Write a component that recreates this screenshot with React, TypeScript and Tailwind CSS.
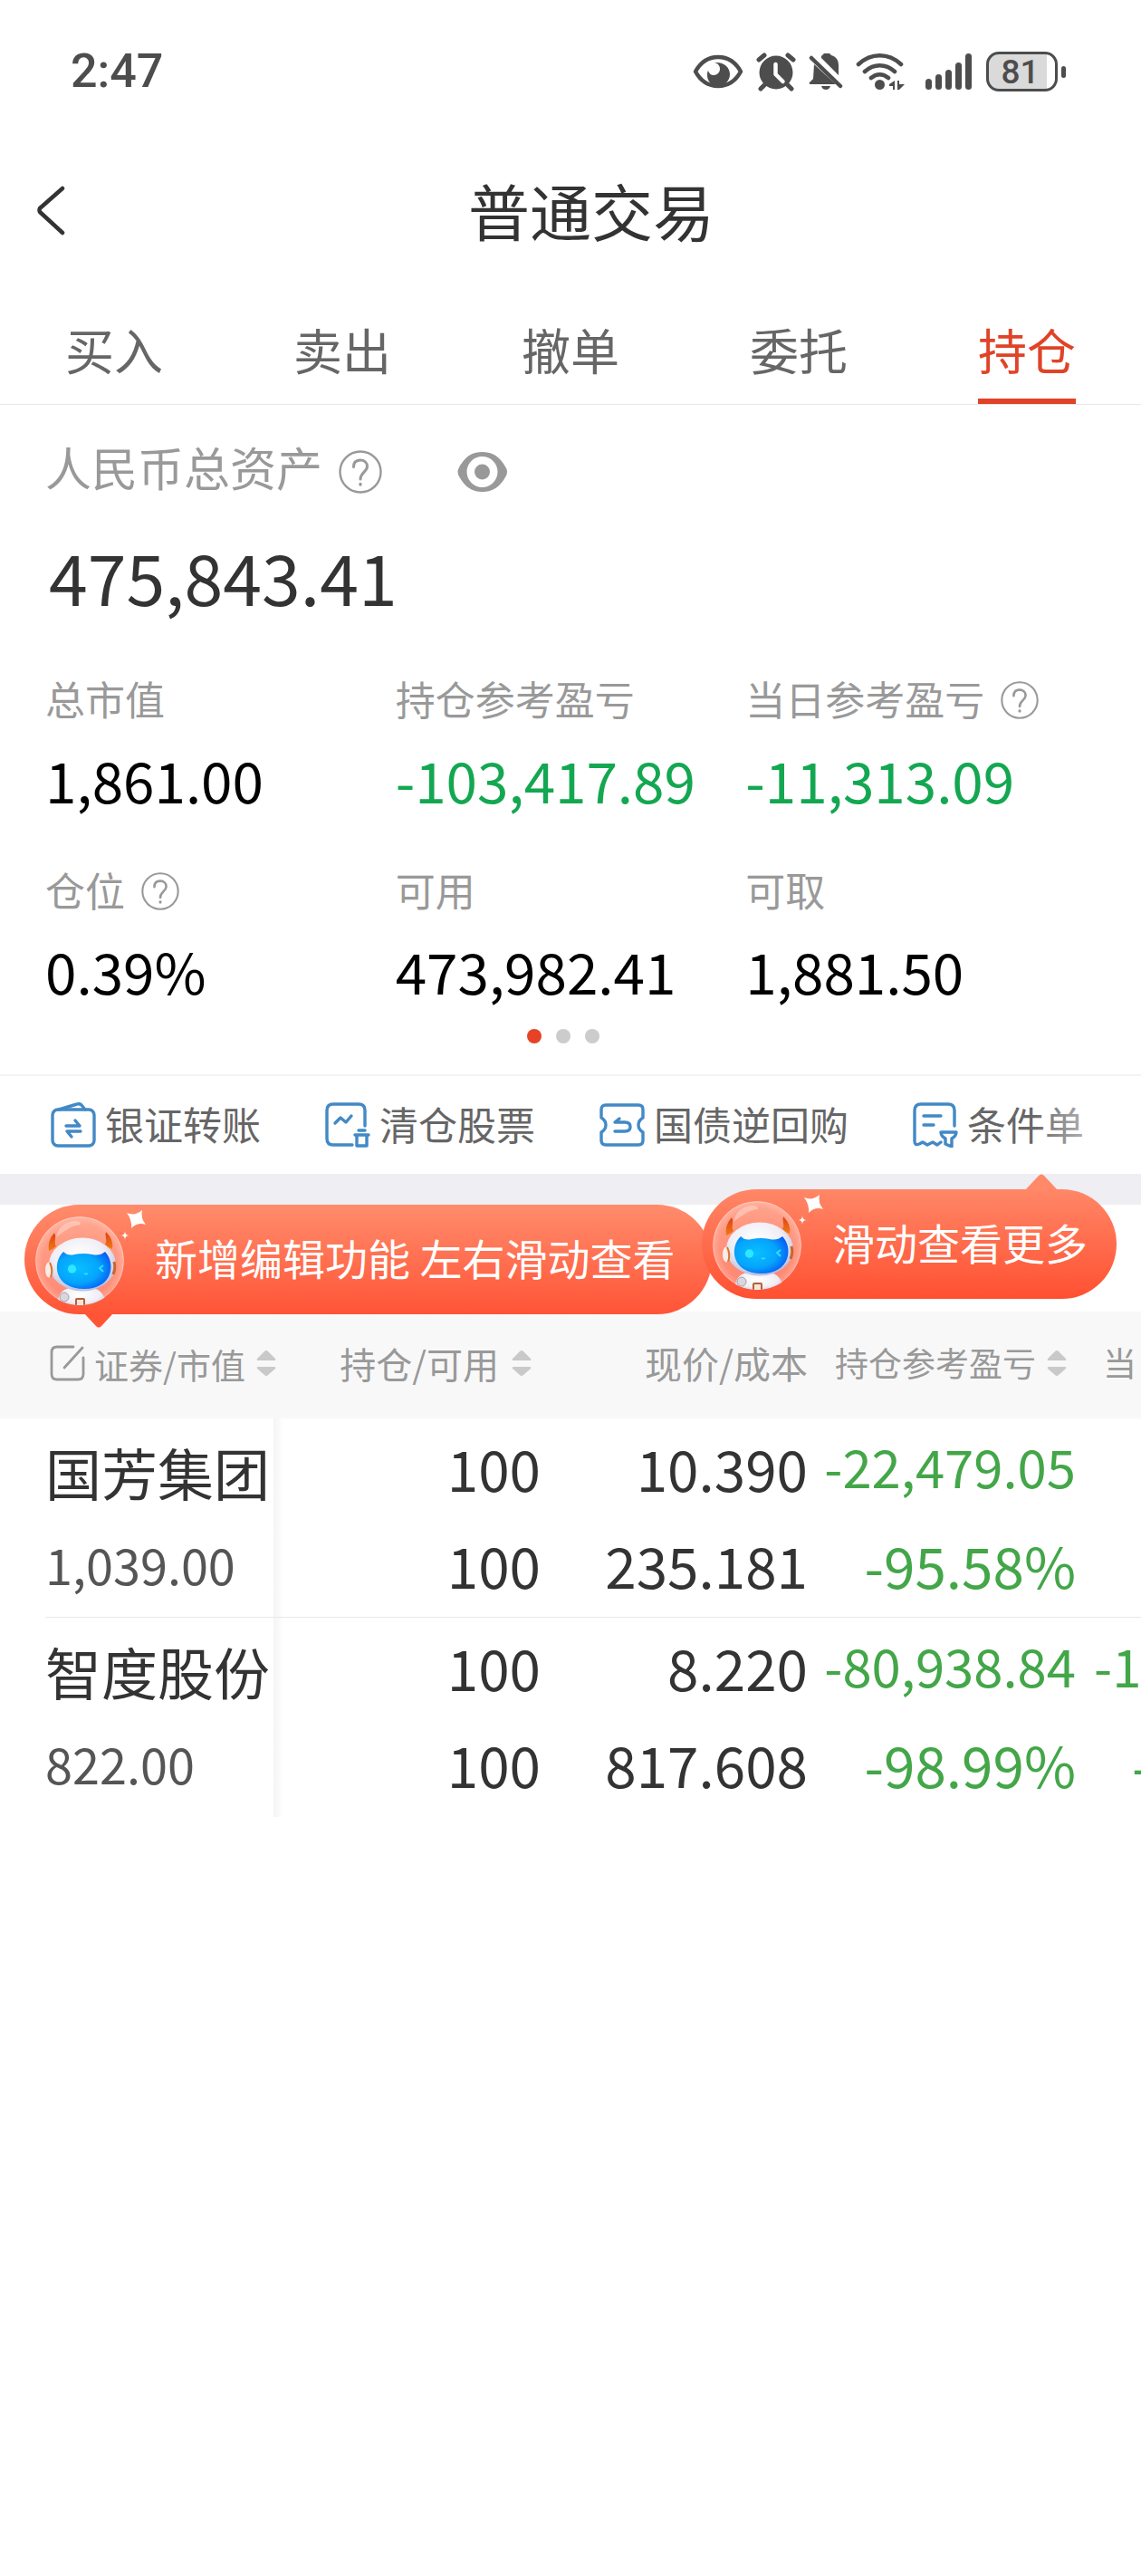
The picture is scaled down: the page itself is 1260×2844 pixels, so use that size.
import React from "react";

const tabs = ["买入", "卖出", "撤单", "委托", "持仓"];

const stats = [
  { label: "总市值", value: "1,861.00" },
  { label: "持仓参考盈亏", value: "-103,417.89", loss: true },
  { label: "当日参考盈亏", value: "-11,313.09", loss: true, help: true },
  { label: "仓位", value: "0.39%", help: true },
  { label: "可用", value: "473,982.41" },
  { label: "可取", value: "1,881.50" },
];

const holdings = [
  {
    name: "国芳集团",
    value: "1,039.00",
    held: "100",
    usable: "100",
    price: "10.390",
    cost: "235.181",
    profit: "-22,479.05",
    ratio: "-95.58%",
    day: "",
    dayRatio: "",
  },
  {
    name: "智度股份",
    value: "822.00",
    held: "100",
    usable: "100",
    price: "8.220",
    cost: "817.608",
    profit: "-80,938.84",
    ratio: "-98.99%",
    day: "-1",
    dayRatio: "-",
  },
];

function StatusBar() {
  return (
    <div className="flex h-[158px] items-center pl-[78px] pr-[83px] text-[#4d4d4d]">
      <span className="flex-1 font-['Roboto',sans-serif] text-[52px] font-medium leading-[60px]">2:47</span>
      <div className="flex items-center">
        {/* eye comfort */}
        <svg width="56" height="44" viewBox="0 0 56 44" fill="none" aria-hidden="true">
          <path d="M3 22C9 11 18 6 28 6s19 5 25 16C47 33 38 38 28 38S9 33 3 22Z" stroke="currentColor" strokeWidth="4.5" strokeLinejoin="round" />
          <path d="M24 12c10-1 17 5 17 13 0 7-6 13-13 13s-12-5-12-12c0-2 0-3 1-5 1 3 3 5 6 5 4 0 7-3 7-7 0-3-2-6-6-7Z" fill="currentColor" />
        </svg>
        {/* alarm */}
        <svg className="ml-[14px]" width="44" height="44" viewBox="0 0 44 44" fill="none" aria-hidden="true">
          <circle cx="22" cy="23" r="18.5" fill="currentColor" />
          <path d="M3 9l6-5M41 9l-6-5" stroke="currentColor" strokeWidth="5" strokeLinecap="round" />
          <path d="M10 36l-5 5M34 36l5 5" stroke="currentColor" strokeWidth="5" strokeLinecap="round" />
          <path d="M21.500 14v11l8 8" stroke="#fff" strokeWidth="4.500" strokeLinecap="round" strokeLinejoin="round" />
        </svg>
        {/* muted bell */}
        <svg className="ml-[14px]" width="38" height="44" viewBox="0 0 38 44" fill="none" aria-hidden="true">
          <path d="M14 5l3-3h6l2 2c6 2 8 6 8 11v11L14 7Z" fill="currentColor" />
          <path d="M6 14l24 22H2c-1 0-2-1-1-2l4-4Z" fill="currentColor" />
          <path d="M3 7l32 31" stroke="currentColor" strokeWidth="4.500" strokeLinecap="round" />
          <path d="M14 38h10c-1 3-3 4-5 4s-4-1-5-4Z" fill="currentColor" />
        </svg>
        {/* wifi */}
        <svg className="ml-[14px]" width="54" height="44" viewBox="0 0 54 44" fill="none" aria-hidden="true">
          <path d="M3 14c14-13 33-13 47 0M10 22c10-9 23-9 33 0M17 29c6-5 13-5 19 0" stroke="currentColor" strokeWidth="4.600" strokeLinecap="round" />
          <circle cx="26.500" cy="36.500" r="5.500" fill="currentColor" />
          <path d="M43 32v10h-2v-4h-4v-2ZM46 32h2v4h6l-6 6h-2Z" fill="currentColor" />
        </svg>
        {/* signal */}
        <svg className="ml-[22px]" width="54" height="44" viewBox="0 0 54 44" aria-hidden="true">
          <g fill="currentColor">
            <rect x="1" y="30" width="7" height="12" rx="3.500" />
            <rect x="12" y="25" width="7" height="17" rx="3.500" />
            <rect x="23" y="20" width="7" height="22" rx="3.500" />
            <rect x="34" y="12" width="7" height="30" rx="3.500" />
            <rect x="45" y="2" width="7" height="40" rx="3.500" />
          </g>
        </svg>
        <div className="ml-3.5 flex h-[44px] w-[79px] items-center justify-center rounded-[14px] border-[3px] border-[#4d4d4d] bg-[linear-gradient(to_right,#dadada_88%,#fff_88%)] pr-1 font-['Roboto',sans-serif] text-[37px] font-medium leading-none">
          81
        </div>
        <div className="ml-1 h-[13px] w-[5px] rounded-full bg-[#4d4d4d]" />
      </div>
    </div>
  );
}

function HelpIcon({ large = false }: { large?: boolean }) {
  return (
    <svg className={large ? "mt-3 size-12" : "mt-1 size-[42px]"} viewBox="0 0 48 48" fill="none" stroke="#999" strokeWidth="2.400" strokeLinecap="round" aria-hidden="true">
      <circle cx="24" cy="24" r="22.500" />
      <path d="M16.500 18.500c0-5 3-7.500 7.500-7.500s7.500 3 7.500 7c0 6-7.500 6.500-7.500 14" strokeWidth="3" />
      <path d="M24 37.500v.5" strokeWidth="3.400" />
    </svg>
  );
}

function SortIcon() {
  return (
    <svg width="22" height="30" viewBox="0 0 22 30" fill="#c9c9c9" aria-hidden="true">
      <path d="M11 1q1 0 2 1l8 8q1 2-1 2H2q-2 0-1-2l8-8q1-1 2-1Z" />
      <path d="M11 29q1 0 2-1l8-7q1-2-1-2H2q-2 0-1 2l8 7q1 1 2 1Z" />
    </svg>
  );
}

const iconProps = {
  width: 50,
  height: 50,
  viewBox: "0 0 50 50",
  fill: "none",
  stroke: "#4289c6",
  strokeWidth: 3.4,
  strokeLinecap: "round" as const,
  strokeLinejoin: "round" as const,
  "aria-hidden": true,
};

const actions = [
  {
    label: "银证转账",
    icon: (
      <svg {...iconProps}>
        <rect x="2" y="8" width="46" height="40" rx="6" />
        <path d="M9 8L29 2q3-1 5 1l4 5" />
        <path d="M17 26h15l-5-6M33 32H18l5 6" />
      </svg>
    ),
  },
  {
    label: "清仓股票",
    icon: (
      <svg {...iconProps}>
        <path d="M44 26V9q0-7-7-7H9Q2 2 2 9v31q0 7 7 7h21" />
        <path d="M11 23l6-6 6 5 6-7" />
        <path d="M33 36h15M37 31h7M35 37v11h11V37" />
      </svg>
    ),
  },
  {
    label: "国债逆回购",
    icon: (
      <svg {...iconProps}>
        <path d="M7 3h36q5 0 5 5v9q-5 3-5 8t5 8v9q0 5-5 5H7q-5 0-5-5v-9q5-3 5-8t-5-8V8q0-5 5-5Z" />
        <path d="M22 18l-5 4h11q6 0 6 5t-6 5H17" />
      </svg>
    ),
  },
  {
    label: "条件单",
    icon: (
      <svg {...iconProps}>
        <path d="M46 26V9q0-7-7-7H9Q2 2 2 9v34q0 5 5 3l4-2 5 3 6-3 5 3 4-3" />
        <path d="M12 15h19M12 25h11" />
        <path d="M31 33h17q0 4-5 7v9l-7-3v-6q-5-3-5-7Z" />
      </svg>
    ),
  },
];

function Robot({ id }: { id: string }) {
  return (
    <svg width="124" height="121" viewBox="12 0 124 121" fill="none" aria-hidden="true">
      <defs>
        <radialGradient id={id + "-bubble"} cx=".5" cy=".5" r=".5">
          <stop offset="0" stopColor="#fff" stopOpacity=".2" />
          <stop offset=".85" stopColor="#fff" stopOpacity=".28" />
          <stop offset="1" stopColor="#fff" stopOpacity=".42" />
        </radialGradient>
        <radialGradient id={id + "-visor"} cx=".4" cy=".45" r=".65">
          <stop offset="0" stopColor="#08c0ff" />
          <stop offset=".6" stopColor="#05a4fc" />
          <stop offset="1" stopColor="#0759f4" />
        </radialGradient>
        <radialGradient id={id + "-head"} cx=".45" cy=".35" r=".65">
          <stop offset="0" stopColor="#fff" />
          <stop offset=".6" stopColor="#f0eef5" />
          <stop offset="1" stopColor="#b9bfdf" />
        </radialGradient>
        <linearGradient id={id + "-horn"} x1="0" y1="0" x2="0" y2="1">
          <stop offset="0" stopColor="#dd4214" />
          <stop offset="1" stopColor="#f07a12" />
        </linearGradient>
        <clipPath id={id + "-clip"}>
          <circle cx="61" cy="62" r="49" />
        </clipPath>
      </defs>
      <circle cx="61" cy="62" r="48.500" fill={"url(#" + id + "-bubble)"} stroke="#fff" strokeOpacity=".4" />
      <path d="M35 36q3-16 20-18 8 0 7 4-9 1-14 5-7 4-13 9Z" fill="#fff" fillOpacity=".32" />
      <g clipPath={"url(#" + id + "-clip)"}>
        <path d="M36 114q0-20 14-22h26q12 2 16 22Z" fill={"url(#" + id + "-head)"} />
        <circle cx="44" cy="102" r="5" fill="#d9d6dd" stroke="#a79fa8" />
        <rect x="57" y="104" width="9" height="12" rx="1" fill="#f3e5dc" stroke="#b85f35" strokeWidth="2" />
      </g>
      <ellipse cx="64" cy="66" rx="37" ry="29.500" fill={"url(#" + id + "-head)"} />
      <path d="M33 31q-8 9-6 20 4-1 8-5-2-3-1-8 1-4-1-7Z" fill={"url(#" + id + "-horn)"} />
      <path d="M90 30q9 9 7 19-4-1-8-5 2-3 1-7-1-4 0-7Z" fill={"url(#" + id + "-horn)"} />
      <ellipse cx="27" cy="72" rx="4" ry="8.500" fill="#f8ece6" />
      <path d="M28 64q4 8 1 16" stroke="#d8742c" strokeWidth="2" />
      <path d="M99 63q2 7-1 14" stroke="#c9652c" strokeWidth="3" />
      <path d="M43 52q5 5 12 3 10-2 20 0 8 2 14-3C101 64 98 93 66 93 33 93 30 64 43 52Z" fill={"url(#" + id + "-visor)"} />
      <circle cx="52.500" cy="71" r="4.700" fill="#2fe6ff" />
      <path d="M87 67l-4 3 4 4M66 76q2 1 4 0" stroke="#35dcff" strokeWidth="1.800" />
      <path d="M130 6q-2 9 4 16-9-3-16 4 1-9-5-17 9 4 17-3Z" fill="#fff" />
      <path d="M111 29q0 5 5 5-5 0-5 5 0-5-5-5 5 0 5-5Z" fill="#fff" />
    </svg>
  );
}

export default function App() {
  return (
    <div className="min-h-screen w-full overflow-hidden bg-white font-['Noto_Sans_CJK_SC',sans-serif] text-[#333]">
      <StatusBar />

      <header className="flex h-36 items-center pl-10 pr-[26px] pt-1">
        <button type="button" aria-label="返回" className="flex h-16 w-8 items-center">
          <svg width="32" height="56" viewBox="0 0 32 56" fill="none" stroke="#333" strokeWidth="4.500" strokeLinecap="round" strokeLinejoin="round" aria-hidden="true">
            <path d="M29 4L4 26q-1 2 0 4l25 23" />
          </svg>
        </button>
        <h1 className="flex-1 text-center text-[68px] leading-[80px]">普通交易</h1>
      </header>

      <nav className="flex border-b border-[#e8e8e8]">
        {tabs.map((tab) => (
          <button
            key={tab}
            type="button"
            className={
              tab === "持仓"
                ? "flex h-36 flex-1 justify-center text-[54px] text-[#e04327]"
                : "flex h-36 flex-1 justify-center text-[54px] text-[#666]"
            }
          >
            <span
              className={
                tab === "持仓"
                  ? "h-36 border-b-[6px] border-[#e04327] pt-12 leading-[72px]"
                  : "h-36 pt-12 leading-[72px]"
              }
            >
              {tab}
            </span>
          </button>
        ))}
      </nav>

      <section className="border-b-2 border-[#f3f3f3] px-[50px] pb-[34px] pt-[38px]">
        <div className="flex h-[60px] items-center text-[51px] text-[#999]">
          <span className="mr-[18px] leading-[60px]">人民币总资产</span>
          <HelpIcon large />
          <button type="button" aria-label="隐藏金额" className="ml-[83px] mt-3">
            <svg width="55" height="44" viewBox="0 0 55 44" aria-hidden="true">
              <path d="M27.500 0c12 0 20 6 26 17q3 5 0 10c-6 11-14 17-26 17S8 38 2 27q-3-5 0-10C8 6 15.500 0 27.500 0Z" fill="#999" />
              <circle cx="27.500" cy="22" r="17" fill="#fff" />
              <circle cx="27.500" cy="22" r="8.500" fill="#999" />
            </svg>
          </button>
        </div>
        <p className="mt-[51px] pl-1 text-[77px] leading-[80px]">475,843.41</p>
        <dl className="mt-[65px] grid grid-cols-3 gap-y-14">
          {stats.map((s) => (
            <div key={s.label}>
              <dt className="flex h-[60px] items-center gap-[18px] text-[44px] leading-[60px] text-[#999]">
                {s.label}
                {s.help && <HelpIcon />}
              </dt>
              <dd
                className={
                  s.loss
                    ? "mt-[23px] text-[62px] leading-[72px] text-[#14a751]"
                    : "mt-[23px] text-[62px] leading-[72px] text-black"
                }
              >
                {s.value}
              </dd>
            </div>
          ))}
        </dl>
        <div className="mt-[29px] flex justify-center gap-4 pr-4">
          <span className="size-4 rounded-full bg-[#e64326]" />
          <span className="size-4 rounded-full bg-[#ccc]" />
          <span className="size-4 rounded-full bg-[#ccc]" />
        </div>
      </section>

      <div className="relative flex h-[108px] items-center gap-[71px] overflow-hidden pl-[56px]">
        {actions.map((a) => (
          <button key={a.label} type="button" className="flex shrink-0 items-center gap-2.5 text-[43px] leading-[60px] text-[#666]">
            {a.icon}
            <span className="pb-1">{a.label}</span>
          </button>
        ))}
        <div className="pointer-events-none absolute inset-y-0 right-0 w-[120px] bg-[linear-gradient(to_right,transparent,#fff)]" />
      </div>

      <div className="h-[34px] bg-[#efeef3]" />

      <div className="relative z-10 h-[118px]">
        <div className="absolute left-[27px] top-0">
          <div className="flex h-[121px] items-center gap-2 rounded-full bg-[linear-gradient(#ff8c6c,#ff5436)] pl-3 pr-10 text-[47px] text-white">
            <Robot id="edit" />
            <span className="whitespace-nowrap pb-1">新增编辑功能 左右滑动查看</span>
          </div>
          <svg className="absolute left-[66px] top-[120px]" width="32" height="16" viewBox="0 0 32 16" fill="#ff5436" aria-hidden="true">
            <path d="M0 0h32L19 14q-3 3-6 0Z" />
          </svg>
        </div>
        <div className="absolute -top-[17px] right-[27px]">
          <div className="flex h-[121px] items-center gap-2 rounded-full bg-[linear-gradient(#ff8767,#ff5031)] pl-3 pr-8 text-[47px] text-white">
            <Robot id="more" />
            <span className="whitespace-nowrap pb-1">滑动查看更多</span>
          </div>
          <svg className="absolute -top-[17px] right-[65px]" width="36" height="18" viewBox="0 0 36 18" fill="#ff8969" aria-hidden="true">
            <path d="M0 18h36L21 2q-3-3-6 0Z" />
          </svg>
        </div>
      </div>

      <table className="w-full table-fixed border-collapse whitespace-nowrap">
        <colgroup>
          <col className="w-[302px]" />
          <col className="w-[295px]" />
          <col className="w-[295px]" />
          <col className="w-[296px]" />
          <col />
        </colgroup>
        <thead>
          <tr className="h-[118px] bg-[#f8f8f8] text-[#999]">
            <th scope="col" className="p-0 pb-1 pl-[55px] text-[38px] font-normal">
              <button type="button" className="flex items-center">
                <svg width="39" height="40" viewBox="0 0 39 40" fill="none" stroke="#999" strokeWidth="2.800" strokeLinecap="round" aria-hidden="true">
                  <path d="M26 2H8Q2 2 2 8v24q0 6 6 6h23q6 0 6-6V14" />
                  <path d="M36 3L16 25" />
                </svg>
                <span className="ml-2.5">证券/市值</span>
                <span className="ml-3">
                  <SortIcon />
                </span>
              </button>
            </th>
            <th scope="col" className="p-0 pb-1 pr-2.5 text-[40px] font-normal">
              <button type="button" className="ml-auto flex items-center gap-3.5">
                持仓/可用
                <SortIcon />
              </button>
            </th>
            <th scope="col" className="p-0 pb-1 text-right text-[41px] font-normal">
              现价/成本
            </th>
            <th scope="col" className="p-0 pb-1 pr-2.5 text-[37px] font-normal">
              <button type="button" className="ml-auto flex items-center gap-3">
                持仓参考盈亏
                <SortIcon />
              </button>
            </th>
            <th scope="col" className="p-0 pb-1 pl-[30px] text-left text-[37px] font-normal">
              当
            </th>
          </tr>
        </thead>
        <tbody>
          {holdings.map((h, i) => {
            const line = i === 0 ? "h-[220px] border-b border-[#e8e8e8]" : "h-[220px]";
            return (
              <tr key={h.name} className="text-right align-top text-[62px]">
                <td className="p-0 pl-[50px] text-left">
                  <div className={line + " pt-[19px]"}>
                    <div className="leading-[80px]">{h.name}</div>
                    <div className="mt-8 text-[54px] leading-[60px] text-[#555]">{h.value}</div>
                  </div>
                </td>
                <td className="bg-[linear-gradient(to_right,#f4f4f4,#fff)] bg-[length:11px_100%] bg-no-repeat p-0">
                  <div className={line + " pt-[14px]"}>
                    <div className="leading-[80px]">{h.held}</div>
                    <div className="mt-[27px] leading-[80px]">{h.usable}</div>
                  </div>
                </td>
                <td className="p-0">
                  <div className={line + " pt-[14px]"}>
                    <div className="leading-[80px]">{h.price}</div>
                    <div className="mt-[27px] leading-[80px]">{h.cost}</div>
                  </div>
                </td>
                <td className="p-0 text-[#43a648]">
                  <div className={line + " pt-3"}>
                    <div className="text-[58px] leading-[80px]">{h.profit}</div>
                    <div className="mt-[29px] leading-[80px]">{h.ratio}</div>
                  </div>
                </td>
                <td className="p-0 text-[#43a648]">
                  <div className={line + " pt-3"}>
                    <div className="h-20 pl-5 text-left text-[58px] leading-[80px]">{h.day}</div>
                    <div className="mt-[29px] h-20 pl-[62px] text-left leading-[80px]">{h.dayRatio}</div>
                  </div>
                </td>
              </tr>
            );
          })}
        </tbody>
      </table>
    </div>
  );
}
